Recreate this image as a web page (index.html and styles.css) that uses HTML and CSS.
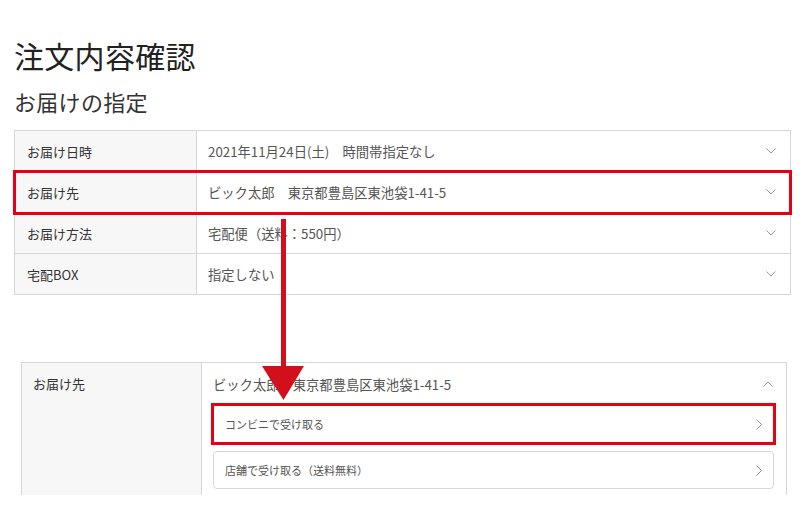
FILE: index.html
```html
<!DOCTYPE html>
<html lang="ja">
<head>
<meta charset="utf-8">
<title>注文内容確認</title>
<link rel="stylesheet" href="styles.css">
</head>
<body>
<div class="page">
  <h1 class="title">注文内容確認</h1>
  <h2 class="subtitle">お届けの指定</h2>

  <div class="table">
    <div class="row">
      <div class="label">お届け日時</div>
      <div class="value"><span>2021年11月24日(土)　時間帯指定なし</span>
        <svg class="chev" width="10" height="6" viewBox="0 0 10 6"><polyline points="0.5,0.5 5,5 9.5,0.5" fill="none" stroke="#9a9a9a" stroke-width="1"/></svg>
      </div>
    </div>
    <div class="row hl">
      <div class="label">お届け先</div>
      <div class="value"><span>ビック太郎　東京都豊島区東池袋1-41-5</span>
        <svg class="chev" width="10" height="6" viewBox="0 0 10 6"><polyline points="0.5,0.5 5,5 9.5,0.5" fill="none" stroke="#9a9a9a" stroke-width="1"/></svg>
      </div>
    </div>
    <div class="row">
      <div class="label">お届け方法</div>
      <div class="value"><span>宅配便（送料：550円）</span>
        <svg class="chev" width="10" height="6" viewBox="0 0 10 6"><polyline points="0.5,0.5 5,5 9.5,0.5" fill="none" stroke="#9a9a9a" stroke-width="1"/></svg>
      </div>
    </div>
    <div class="row">
      <div class="label">宅配BOX</div>
      <div class="value"><span>指定しない</span>
        <svg class="chev" width="10" height="6" viewBox="0 0 10 6"><polyline points="0.5,0.5 5,5 9.5,0.5" fill="none" stroke="#9a9a9a" stroke-width="1"/></svg>
      </div>
    </div>
  </div>

  <div class="table2">
    <div class="label2">お届け先</div>
    <div class="value2">
      <div class="addr"><span>ビック太郎　東京都豊島区東池袋1-41-5</span>
        <svg class="chev" width="10" height="6" viewBox="0 0 10 6"><polyline points="0.5,5.5 5,1 9.5,5.5" fill="none" stroke="#9a9a9a" stroke-width="1"/></svg>
      </div>
      <div class="btn hl2"><span>コンビニで受け取る</span>
        <svg width="6" height="11" viewBox="0 0 6 11"><polyline points="0.5,0.5 5.5,5.5 0.5,10.5" fill="none" stroke="#8a8a8a" stroke-width="1"/></svg>
      </div>
      <div class="btn"><span>店舗で受け取る（送料無料）</span>
        <svg width="6" height="11" viewBox="0 0 6 11"><polyline points="0.5,0.5 5.5,5.5 0.5,10.5" fill="none" stroke="#8a8a8a" stroke-width="1"/></svg>
      </div>
    </div>
  </div>

  <svg class="arrow" width="42" height="181" viewBox="0 0 42 181">
    <rect x="19" y="0" width="5" height="148" fill="#d2101b"/>
    <polygon points="0,147 42,147 21.5,181" fill="#d2101b"/>
  </svg>
</div>
</body>
</html>
```

FILE: styles.css
```css
* { box-sizing: border-box; }
html, body { margin: 0; padding: 0; background: #fff; }
body {
  font-family: "Noto Sans CJK JP", "Noto Sans", sans-serif;
  color: #333;
  width: 807px;
  height: 511px;
  overflow: hidden;
}
.page {
  position: relative;
  padding: 35px 16px 0 14px;
}
.title {
  margin: 0;
  font-size: 30px;
  line-height: 40px;
  font-weight: 400;
  color: #222;
  letter-spacing: 0.3px;
}
.subtitle {
  margin: 11px 0 0;
  font-size: 22px;
  line-height: 30px;
  font-weight: 400;
  color: #333;
  letter-spacing: 0.3px;
}
.table {
  margin-top: 14px;
  border: 1px solid #d6d6d6;
  border-bottom: none;
}
.row {
  display: grid;
  grid-template-columns: 182px 1fr;
  height: 41px;
  border-bottom: 1px solid #d6d6d6;
  background: #fff;
}
.row.hl {
  position: relative;
  z-index: 1;
  outline: 3px solid #e60012;
  outline-offset: -1px;
}
.label {
  background: #f7f7f7;
  border-right: 1px solid #d6d6d6;
  padding-left: 12px;
  display: flex;
  align-items: center;
  font-size: 13px;
  color: #333;
}
.value {
  display: flex;
  align-items: center;
  justify-content: space-between;
  padding: 0 14px 0 11px;
  font-size: 13.3px;
  color: #555;
}
.chev { display: block; }
.table2 {
  margin: 67px 4px 0 7px;
  height: 133px;
  overflow: hidden;
  display: grid;
  grid-template-columns: 180px 1fr;
  border: 1px solid #d6d6d6;
  border-bottom: none;
}
.label2 {
  background: #f7f7f7;
  border-right: 1px solid #d6d6d6;
  padding: 11px 0 0 11px;
  font-size: 13px;
  line-height: 20px;
  color: #333;
}
.value2 {
  padding: 11px 12px 0 11px;
  display: flex;
  flex-direction: column;
}
.addr {
  display: flex;
  align-items: center;
  justify-content: space-between;
  height: 20px;
  font-size: 13.3px;
  color: #555;
  padding-right: 1px;
  margin-bottom: 11px;
}
.btn {
  display: flex;
  align-items: center;
  justify-content: space-between;
  height: 38px;
  border: 1px solid #d6d6d6;
  border-radius: 4px;
  padding: 0 11px 0 11px;
  font-size: 11px;
  color: #555;
  margin-bottom: 8px;
  background: #fff;
}
.btn svg { display: block; }
.btn.hl2 {
  outline: 3px solid #e60012;
  outline-offset: -1px;
  border-radius: 0;
}
.arrow {
  position: absolute;
  left: 262px;
  top: 219px;
  z-index: 5;
}
```
